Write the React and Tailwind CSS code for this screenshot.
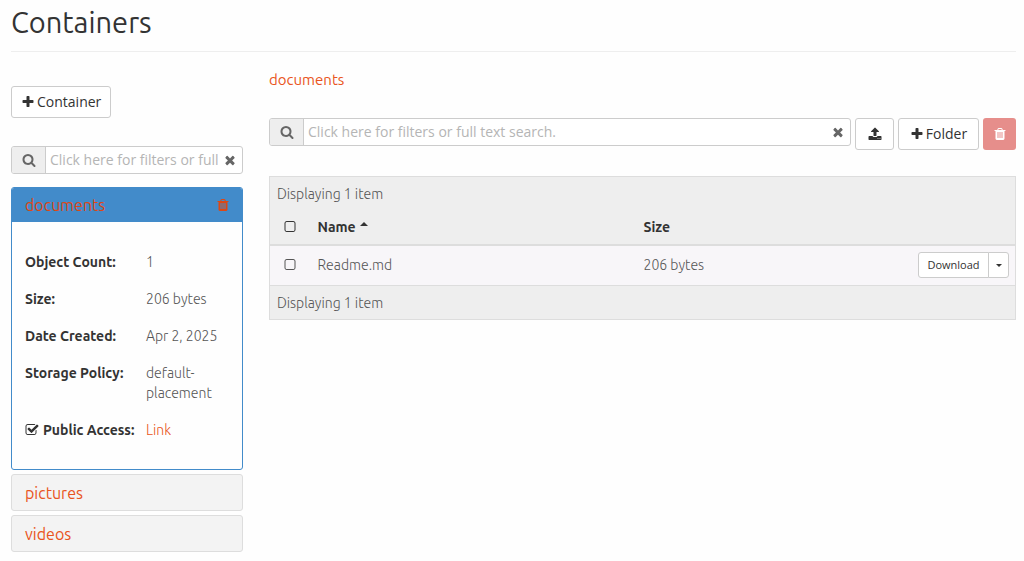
import { useState } from "react";

const paths = {
  search:
    "M1216 832q0-185-131.5-316.5t-316.5-131.5-316.5 131.5-131.5 316.5 131.5 316.5 316.5 131.5 316.5-131.5 131.5-316.5zm512 832q0 52-38 90t-90 38q-54 0-90-38l-343-342q-179 124-399 124-143 0-273.5-55.5t-225-150-150-225-55.5-273.5 55.5-273.5 150-225 225-150 273.5-55.5 273.5 55.5 225 150 150 225 55.5 273.5q0 220-124 399l343 343q37 37 37 90z",
  plus: "M1600 736v192q0 40-28 68t-68 28h-416v416q0 40-28 68t-68 28h-192q-40 0-68-28t-28-68v-416h-416q-40 0-68-28t-28-68v-192q0-40 28-68t68-28h416v-416q0-40 28-68t68-28h192q40 0 68 28t28 68v416h416q40 0 68 28t28 68z",
  times:
    "M1490 1322q0 40-28 68l-136 136q-28 28-68 28t-68-28l-294-294-294 294q-28 28-68 28t-68-28l-136-136q-28-28-28-68t28-68l294-294-294-294q-28-28-28-68t28-68l136-136q28-28 68-28t68 28l294 294 294-294q28-28 68-28t68 28l136 136q28 28 28 68t-28 68l-294 294 294 294q28 28 28 68z",
  trash:
    "M704 1376v-704q0-14-9-23t-23-9h-64q-14 0-23 9t-9 23v704q0 14 9 23t23 9h64q14 0 23-9t9-23zm256 0v-704q0-14-9-23t-23-9h-64q-14 0-23 9t-9 23v704q0 14 9 23t23 9h64q14 0 23-9t9-23zm256 0v-704q0-14-9-23t-23-9h-64q-14 0-23 9t-9 23v704q0 14 9 23t23 9h64q14 0 23-9t9-23zm-544-992h448l-48-117q-7-9-17-11h-317q-10 2-17 11zm928 32v64q0 14-9 23t-23 9h-96v948q0 83-47 143.5t-113 60.5h-832q-66 0-113-58.5t-47-141.5v-952h-96q-14 0-23-9t-9-23v-64q0-14 9-23t23-9h309l70-167q15-37 54-63t79-26h320q40 0 79 26t54 63l70 167h309q14 0 23 9t9 23z",
  upload:
    "M1344 1472q0-26-19-45t-45-19-45 19-19 45 19 45 45 19 45-19 19-45zm256 0q0-26-19-45t-45-19-45 19-19 45 19 45 45 19 45-19 19-45zm128-224v320q0 40-28 68t-68 28h-1472q-40 0-68-28t-28-68v-320q0-40 28-68t68-28h427q21 56 70.5 92t110.5 36h256q61 0 110.5-36t70.5-92h427q40 0 68 28t28 68zm-325-648q-17 40-59 40h-256v448q0 26-19 45t-45 19h-256q-26 0-45-19t-19-45v-448h-256q-42 0-59-40-17-39 14-69l448-448q18-19 45-19t45 19l448 448q31 30 14 69z",
  checked:
    "M1472 930v318q0 119-84.5 203.5t-203.5 84.5h-832q-119 0-203.5-84.5t-84.5-203.5v-832q0-119 84.5-203.5t203.5-84.5h832q63 0 117 25 15 7 18 23 3 17-9 29l-49 49q-10 10-23 10-3 0-9-2-23-6-45-6h-832q-66 0-113 47t-47 113v832q0 66 47 113t113 47h832q66 0 113-47t47-113v-254q0-13 9-22l64-64q10-10 23-10 6 0 12 3 20 8 20 29zm231-489l-814 814q-24 24-57 24t-57-24l-430-430q-24-24-24-57t24-57l110-110q24-24 57-24t57 24l263 263 647-647q24-24 57-24t57 24l110 110q24 24 24 57t-24 57z",
  unchecked:
    "M1312 256h-832q-66 0-113 47t-47 113v832q0 66 47 113t113 47h832q66 0 113-47t47-113v-832q0-66-47-113t-113-47zm288 160v832q0 119-84.5 203.5t-203.5 84.5h-832q-119 0-203.5-84.5t-84.5-203.5v-832q0-119 84.5-203.5t203.5-84.5h832q119 0 203.5 84.5t84.5 203.5z",
};

const Icon = ({ name, className = "size-3.5" }) => (
  <svg
    viewBox="0 0 1792 1792"
    fill="currentColor"
    aria-hidden="true"
    className={`shrink-0 ${className}`}
  >
    <path d={paths[name]} />
  </svg>
);

const Checkbox = ({ checked, onChange, label, children }) => (
  <label className="relative inline-flex items-center gap-1 cursor-pointer">
    <input
      type="checkbox"
      checked={checked}
      onChange={(e) => onChange(e.target.checked)}
      aria-label={label}
      className="absolute inset-0 size-full appearance-none"
    />
    <Icon name={checked ? "checked" : "unchecked"} />
    {children}
  </label>
);

const SearchBar = ({ label }) => {
  const [query, setQuery] = useState("");

  return (
    <div className="flex h-7 flex-1 min-w-0 rounded-[3px] border border-[#ccc] bg-white overflow-hidden">
      <span className="flex w-[34px] shrink-0 items-center justify-center border-r border-[#ccc] bg-[#eee] text-[#666]">
        <Icon name="search" />
      </span>
      <input
        type="text"
        aria-label={label}
        value={query}
        onChange={(e) => setQuery(e.target.value)}
        placeholder="Click here for filters or full text search."
        className="min-w-0 flex-1 pl-1 font-['Open_Sans','Noto_Sans',sans-serif] text-sm text-[#555] placeholder:text-[#b5b5b5] outline-none"
      />
      <button
        type="button"
        aria-label="Clear search"
        onClick={() => setQuery("")}
        className="flex w-6 shrink-0 items-center justify-center text-[#666]"
      >
        <Icon name="times" />
      </button>
    </div>
  );
};

const details = [
  { label: "Object Count:", value: "1" },
  { label: "Size:", value: "206 bytes" },
  { label: "Date Created:", value: "Apr 2, 2025" },
  { label: "Storage Policy:", value: "default-placement" },
];

const Sidebar = () => {
  const [isPublic, setIsPublic] = useState(true);

  return (
    <aside className="w-[232px] shrink-0 pt-[34px]">
      <button
        type="button"
        className="flex h-8 items-center gap-0.5 rounded-[3px] border border-[#ccc] bg-white px-[9px] font-['Open_Sans','Noto_Sans',sans-serif] text-sm text-[#333]"
      >
        <Icon name="plus" />
        Container
      </button>

      <div className="mt-7 flex">
        <SearchBar label="Filter containers" />
      </div>

      {/* Selected container */}
      <section className="mt-[13px] overflow-hidden rounded-[3px] border border-[#428bca]">
        <div className="flex h-[34px] items-center justify-between bg-[#428bca] px-3 text-[#dd4814]">
          <a href="#documents" className="pl-px text-base">
            documents
          </a>
          <button type="button" aria-label="Delete documents">
            <Icon name="trash" />
          </button>
        </div>
        <dl className="grid grid-cols-[109px_1fr] gap-x-3 gap-y-[17px] px-[13px] pt-[30px] pb-[27px] leading-5">
          {details.map((item) => (
            <div key={item.label} className="contents">
              <dt className="font-bold whitespace-nowrap text-[#333]">{item.label}</dt>
              <dd className="font-light text-[#555]">{item.value}</dd>
            </div>
          ))}
          <dt className="font-bold whitespace-nowrap text-[#333]">
            <Checkbox checked={isPublic} onChange={setIsPublic}>
              Public Access:
            </Checkbox>
          </dt>
          <dd>
            <a href="#link" className="font-light text-[#e95420]">
              Link
            </a>
          </dd>
        </dl>
      </section>

      {["pictures", "videos"].map((name) => (
        <a
          key={name}
          href={`#${name}`}
          className="mt-1 flex h-[37px] items-center rounded-[3px] border border-[#ddd] bg-[#f3f3f3] px-[13px] text-base text-[#e95420]"
        >
          {name}
        </a>
      ))}
    </aside>
  );
};

const ObjectTable = () => {
  const [selected, setSelected] = useState(false);

  return (
    <table className="mt-[26px] w-full table-fixed border border-[#ddd] bg-[#eee] text-left font-light text-[#555]">
      <colgroup>
        <col className="w-10" />
        <col className="w-[326px]" />
        <col />
        <col className="w-[120px]" />
      </colgroup>
      <thead>
        <tr>
          <td colSpan={4} className="h-[34px] px-[7px]">
            Displaying 1 item
          </td>
        </tr>
        <tr className="h-[34px] border-b-2 border-[#ddd] text-[#333]">
          <th className="pl-[13px]">
            <span className="flex">
              <Checkbox checked={selected} onChange={setSelected} label="Select all" />
            </span>
          </th>
          <th className="px-2 font-bold" aria-sort="ascending">
            <button type="button" className="flex items-center gap-1 font-bold">
              Name
              <span className="mb-1.5 border-x-4 border-b-4 border-x-transparent border-b-[#333]" />
            </button>
          </th>
          <th className="px-2 font-bold">Size</th>
          <th />
        </tr>
      </thead>
      <tbody>
        <tr className="h-[41px] bg-[#f8f6f9]">
          <td className="pl-[13px]">
            <span className="flex">
              <Checkbox checked={selected} onChange={setSelected} label="Select Readme.md" />
            </span>
          </td>
          <td className="px-2">Readme.md</td>
          <td className="px-2">206 bytes</td>
          <td className="pr-1.5">
            <div className="flex justify-end font-['Open_Sans','Noto_Sans',sans-serif] text-[11px] font-normal text-[#333]">
              <button
                type="button"
                className="h-[26px] w-[71px] rounded-l-[3px] border border-[#ccc] bg-white"
              >
                Download
              </button>
              <button
                type="button"
                aria-label="More actions"
                className="-ml-px flex h-[26px] w-[21px] items-center justify-center rounded-r-[3px] border border-[#ccc] bg-white"
              >
                <span className="border-x-3 border-t-3 border-x-transparent border-t-[#333]" />
              </button>
            </div>
          </td>
        </tr>
      </tbody>
      <tfoot>
        <tr className="border-t border-[#ddd]">
          <td colSpan={4} className="h-[34px] px-[7px]">
            Displaying 1 item
          </td>
        </tr>
      </tfoot>
    </table>
  );
};

const App = () => {
  return (
    <div className="min-h-screen bg-[#fefefe] pr-2 pb-2 pl-[11px] font-['Ubuntu','Noto_Sans',sans-serif] text-sm text-[#333]">
      <header className="h-[52px] border-b border-[#eee] pt-1">
        <h1 className="text-[29px] leading-9">Containers</h1>
      </header>

      <div className="flex gap-[26px]">
        <Sidebar />

        <main className="min-w-0 flex-1 pt-[18px]">
          <a href="#documents" className="block text-[15px] leading-5 text-[#e95420]">
            documents
          </a>

          {/* Toolbar */}
          <div className="mt-7 flex items-start gap-1">
            <SearchBar label="Filter objects" />
            <button
              type="button"
              aria-label="Upload file"
              className="flex h-8 w-[39px] items-center justify-center rounded-[3px] border border-[#ccc] bg-white"
            >
              <Icon name="upload" />
            </button>
            <button
              type="button"
              className="flex h-8 w-[81px] items-center justify-center gap-0.5 rounded-[3px] border border-[#ccc] bg-white font-['Open_Sans','Noto_Sans',sans-serif]"
            >
              <Icon name="plus" />
              Folder
            </button>
            <button
              type="button"
              aria-label="Delete selected"
              disabled={true}
              className="flex h-8 w-[33px] items-center justify-center rounded-[3px] bg-[#e68e8b] text-white"
            >
              <Icon name="trash" />
            </button>
          </div>

          <ObjectTable />
        </main>
      </div>
    </div>
  );
};

export default App;
